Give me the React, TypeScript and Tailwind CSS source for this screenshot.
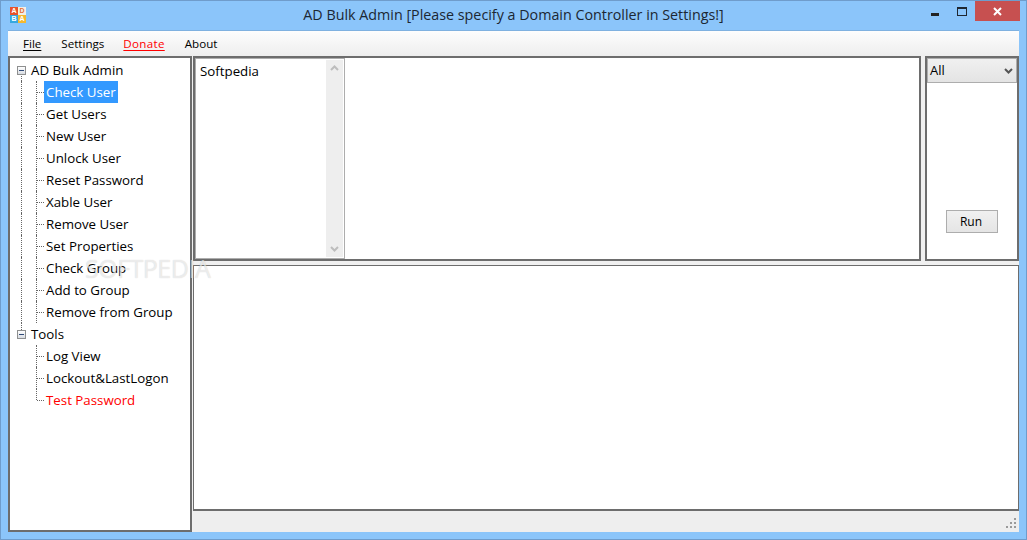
const treeOne = ["Check User", "Get Users", "New User", "Unlock User", "Reset Password", "Xable User", "Remove User", "Set Properties", "Check Group", "Add to Group", "Remove from Group"];
const treeTwo = ["Log View", "Lockout&LastLogon", "Test Password"];

function Expander() {
  return (
    <span className="relative z-10 flex h-[9px] w-[9px] shrink-0 items-center justify-center border border-[#8e8f8f] bg-gradient-to-b from-[#ffffff] to-[#d8dce2]">
      <span className="h-px w-[5px] bg-[#2f4a78]" />
    </span>
  );
}

function TreeItem({ label, selected, red, last, rootLine }: { label: string; selected?: boolean; red?: boolean; last?: boolean; rootLine?: boolean }) {
  return (
    <div className="relative flex h-[22px] items-center pl-[34px]">
      {rootLine && <span className="absolute left-[11px] top-0 h-[22px] border-l border-dotted border-[#666]" />}
      <span className={`absolute left-[26px] top-0 border-l border-dotted border-[#666] ${last ? "h-[11px]" : "h-[22px]"}`} />
      <span className="absolute left-[27px] top-[11px] w-[7px] border-t border-dotted border-[#666]" />
      <span className={`flex h-[22px] items-center px-[2px] pt-px ${selected ? "bg-[#3399ff] text-white" : red ? "text-[#ff0000]" : "text-black"}`}>{label}</span>
    </div>
  );
}

function TreeRoot({ label, line }: { label: string; line?: boolean }) {
  return (
    <div className="relative flex h-[22px] items-center gap-[5px] pl-[7px]">
      {line && <span className="absolute left-[11px] top-[11px] h-[11px] border-l border-dotted border-[#666]" />}
      {!line && <span className="absolute left-[11px] top-0 h-[11px] border-l border-dotted border-[#666]" />}
      <Expander />
      <span className="pt-px">{label}</span>
    </div>
  );
}

export default function App() {
  return (
    <div className="relative flex h-[540px] w-[1027px] flex-col overflow-hidden border border-[#6f9ccb] bg-[#8bc5fa] font-['Open_Sans','Noto_Sans',sans-serif] text-[13.3px] text-black">
      {/* title bar */}
      <div className="relative flex h-[29px] shrink-0 items-center justify-center">
        <div className="absolute left-[9px] top-[6px] grid h-[16px] w-[16px] grid-cols-2 grid-rows-2 text-center font-['Liberation_Sans',sans-serif] text-[7px] font-bold leading-[8px]">
          <span className="bg-[#e8532b] text-white">A</span>
          <span className="bg-[#f2efe4] text-[#e8703a]">D</span>
          <span className="bg-[#35a8e0] text-white">B</span>
          <span className="bg-[#f5b82e] text-white">A</span>
        </div>
        <span className="text-[14.3px] leading-none text-[#1c2733]">AD Bulk Admin [Please specify a Domain Controller in Settings!]</span>
        <div className="absolute right-[6px] top-0 flex items-start">
          <div className="mr-[18px] mt-[12px] h-[2.500px] w-[8px] bg-[#222]" />
          <div className="mr-[8px] mt-[6px] h-[9px] w-[10px] border border-t-[2.500px] border-[#1f2730]" />
          <div className="flex h-[20px] w-[45px] items-center justify-center bg-[#c75050]">
            <svg width="9" height="9" viewBox="0 0 9 9">
              <path d="M1 1l7 7M8 1l-7 7" stroke="#fff" strokeWidth="2" />
            </svg>
          </div>
        </div>
      </div>

      {/* client area */}
      <div className="mx-[7px] flex min-h-0 flex-1 flex-col border-t border-[#7fb1e0] bg-[#f0f0f0]">
        <div className="flex h-[25px] shrink-0 items-center gap-[20px] bg-gradient-to-b from-[#fdfdfd] to-[#eeeeee] pl-[15px] text-[11.6px]">
          <span className="underline underline-offset-2">File</span>
          <span>Settings</span>
          <span className="-ml-px tracking-[0.3px] text-[#ff0000] underline underline-offset-2">Donate</span>
          <span>About</span>
        </div>

        <div className="flex min-h-0 flex-1">
          <div className="w-[184px] shrink-0 border-2 border-[#6d6d6d] bg-white pt-px">
            <TreeRoot label="AD Bulk Admin" line />
            {treeOne.map((t, i) => (
              <TreeItem key={t} label={t} selected={i === 0} rootLine />
            ))}
            <TreeRoot label="Tools" />
            {treeTwo.map((t, i) => (
              <TreeItem key={t} label={t} red={t === "Test Password"} last={i === treeTwo.length - 1} />
            ))}
          </div>

          <div className="flex min-w-0 flex-1 flex-col pl-px">
            <div className="flex h-[205px] shrink-0">
              <div className="flex flex-1 border-2 border-[#6d6d6d] bg-white">
                <div className="flex w-[150px] shrink-0 border border-[#adadad]">
                  <div className="flex-1 px-[4px] pt-[3px]">Softpedia</div>
                  <div className="my-px mr-px flex w-[17px] flex-col items-center justify-between bg-[#eeeeee] py-[5px]">
                    <svg width="9" height="6" viewBox="0 0 9 6"><path d="M1 5l3.500-3.500L8 5" fill="none" stroke="#bdbdbd" strokeWidth="2" /></svg>
                    <svg width="9" height="6" viewBox="0 0 9 6"><path d="M1 1l3.500 3.500L8 1" fill="none" stroke="#bdbdbd" strokeWidth="2" /></svg>
                  </div>
                </div>
              </div>
              <div className="ml-[4px] flex w-[94px] shrink-0 flex-col border-2 border-[#6d6d6d] bg-white">
                <div className="flex h-[25px] shrink-0 items-center justify-between border border-[#adadad] bg-gradient-to-b from-[#f0f0f0] to-[#e4e4e4] pl-[2px] pr-[3px] text-[13px]">
                  <span>All</span>
                  <svg width="9" height="6" viewBox="0 0 9 6"><path d="M1 1l3.500 3.500L8 1" fill="none" stroke="#555" strokeWidth="2" /></svg>
                </div>
                <div className="flex flex-1 items-end justify-center pb-[26px]">
                  <div className="flex h-[23px] w-[52px] items-center justify-center border border-[#adadad] bg-gradient-to-b from-[#f0f0f0] to-[#e5e5e5] pr-[2px] text-[12px]">Run</div>
                </div>
              </div>
            </div>
            <div className="mt-[4px] flex-1 border border-b-2 border-[#6d6d6d] bg-white" />
            <div className="relative h-[21px] shrink-0 bg-[#eeeeee]">
              <svg className="absolute bottom-[3px] right-[2px]" width="11" height="11" viewBox="0 0 11 11" fill="#9a9a9a">
                <rect x="8" y="0" width="2" height="2" />
                <rect x="4" y="4" width="2" height="2" />
                <rect x="8" y="4" width="2" height="2" />
                <rect x="0" y="8" width="2" height="2" />
                <rect x="4" y="8" width="2" height="2" />
                <rect x="8" y="8" width="2" height="2" />
              </svg>
            </div>
          </div>
        </div>
      </div>
      <div className="h-[7px] shrink-0" />

      {/* watermark */}
      <span className="pointer-events-none absolute left-[84px] top-[249px] text-[25px] tracking-[-0.5px] text-white/60 [text-shadow:0_0_1px_rgba(0,0,0,0.2)]">SOFTPEDIA</span>
    </div>
  );
}
